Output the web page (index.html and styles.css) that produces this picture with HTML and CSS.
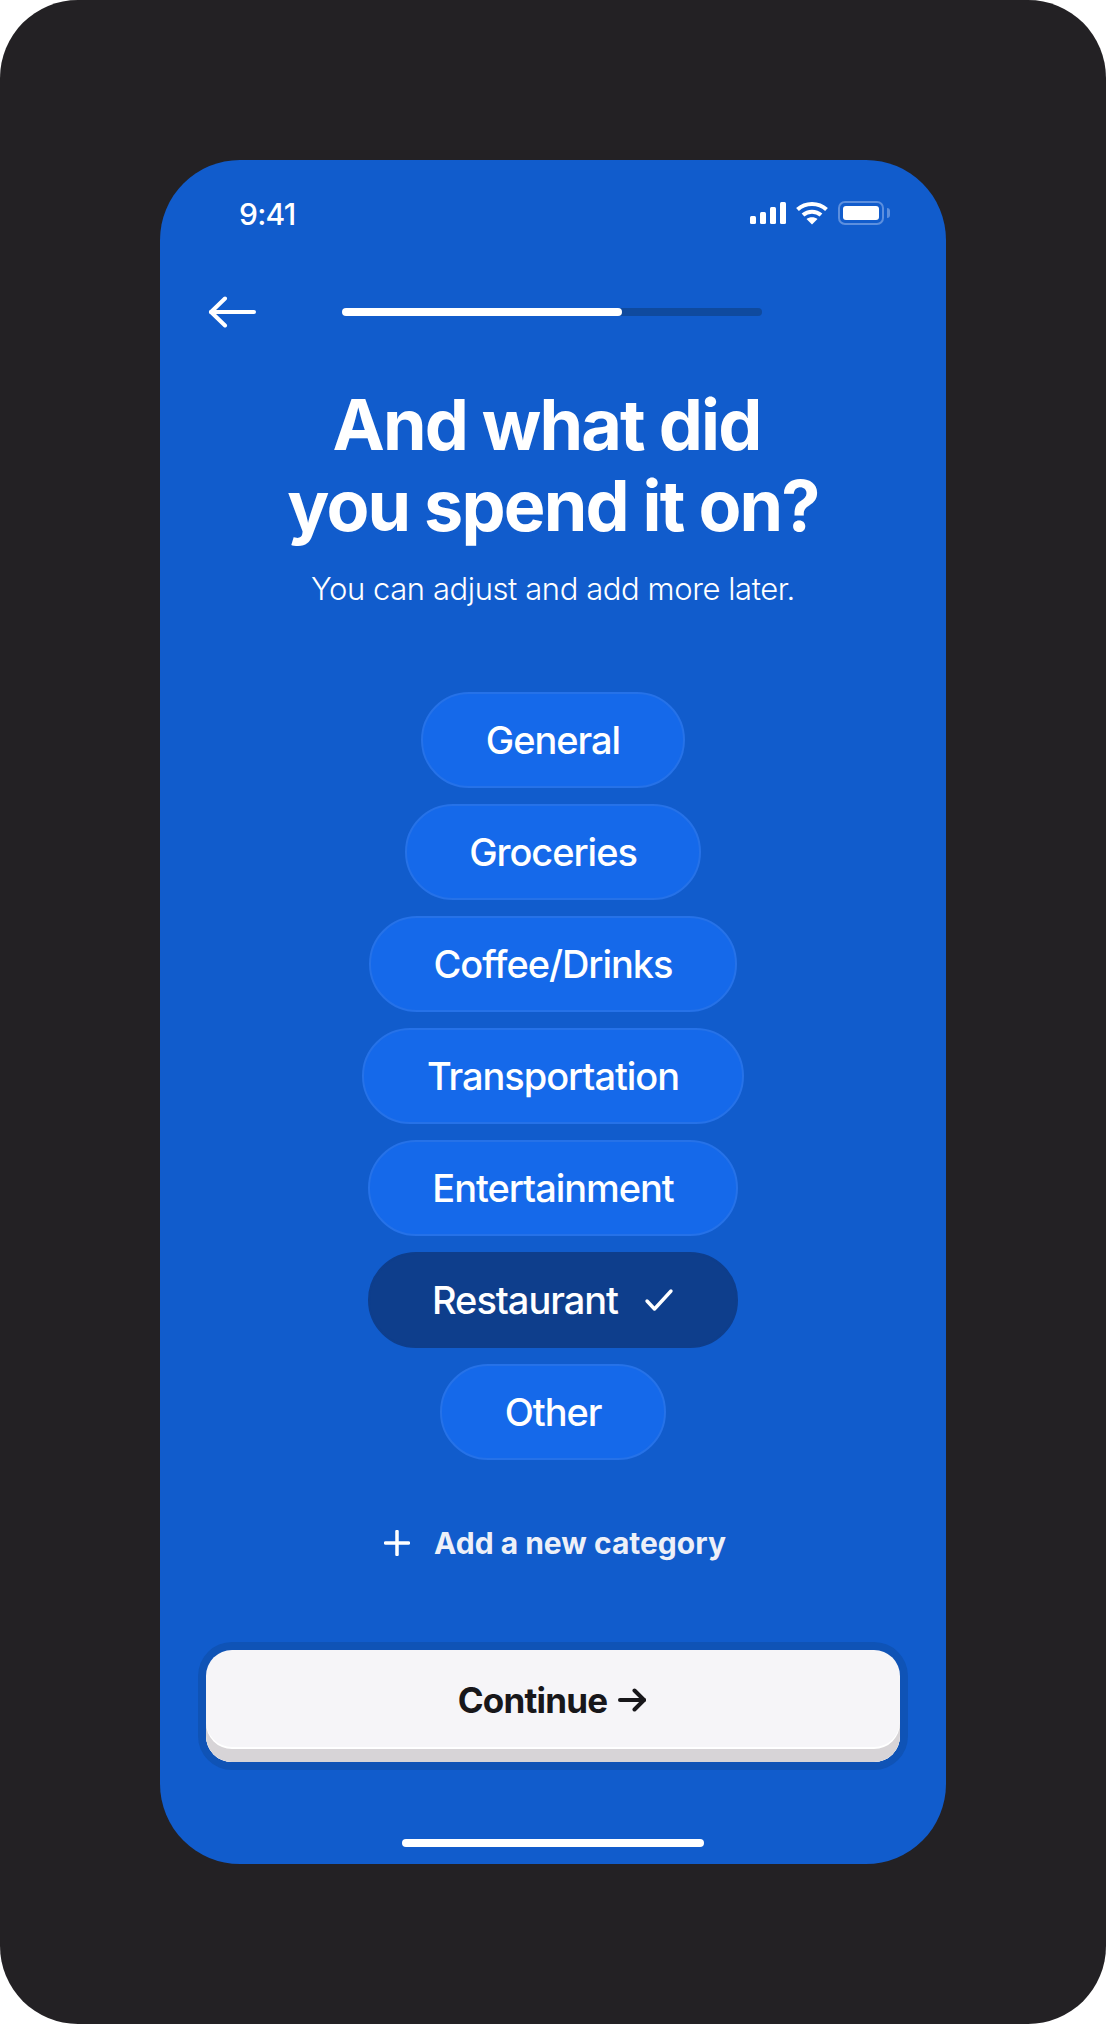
FILE: index.html
```html
<!DOCTYPE html>
<html>
<head>
  <meta charset="utf-8">
  <title>Spending categories</title>
  <link rel="stylesheet" href="styles.css">
</head>
<body>
<div class="frame">
  <div class="phone">

    <div class="status">
      <span class="time">9:41</span>
      <div class="status-icons">
        <svg class="signal" width="36" height="22" viewBox="0 0 36 22" fill="#fff">
          <rect x="0" y="14" width="6" height="8" rx="1.5"/>
          <rect x="10" y="10" width="6" height="12" rx="1.5"/>
          <rect x="20" y="5" width="6" height="17" rx="1.5"/>
          <rect x="30" y="0" width="6" height="22" rx="1.5"/>
        </svg>
        <svg class="wifi" width="32" height="24" viewBox="0 0 32 24" fill="none" stroke="#fff" stroke-width="4">
          <path d="M1.500 8.500C9.500 1 22.500 1 30.500 8.500"/>
          <path d="M7 14C12 9.500 20 9.500 25 14"/>
          <path d="M16 23.500L10.500 18C13.500 15.500 18.500 15.500 21.500 18Z" fill="#fff" stroke="none"/>
        </svg>
        <div class="battery"><div class="battery-fill"></div></div>
      </div>
    </div>

    <div class="topbar">
      <svg class="back" width="48" height="32" viewBox="0 0 48 32" fill="none" stroke="#fff" stroke-width="4" stroke-linecap="round" stroke-linejoin="round">
        <path d="M46 16H3"/>
        <path d="M17 2.500L3 16L17 29.500"/>
      </svg>
      <div class="progress"><div class="progress-fill"></div></div>
    </div>

    <h1 class="title"><span class="title-first">And what did</span><br>you spend it on?</h1>
    <p class="subtitle">You can adjust and add more later.</p>

    <div class="pills">
      <div class="pill">General</div>
      <div class="pill">Groceries</div>
      <div class="pill">Coffee/Drinks</div>
      <div class="pill">Transportation</div>
      <div class="pill">Entertainment</div>
      <div class="pill selected">Restaurant
        <svg width="30" height="24" viewBox="0 0 30 24" fill="none" stroke="#fff" stroke-width="3.400" stroke-linecap="round" stroke-linejoin="round">
          <path d="M3 13L10.500 21L27 3"/>
        </svg>
      </div>
      <div class="pill">Other</div>
    </div>

    <div class="add">
      <svg width="26" height="26" viewBox="0 0 26 26" fill="none" stroke="#fff" stroke-width="3.500" stroke-linecap="round">
        <path d="M13 1.500V24.500"/>
        <path d="M1.500 13H24.500"/>
      </svg>
      <span>Add a new category</span>
    </div>

    <div class="button-ring">
      <div class="button">Continue
        <svg width="28" height="24" viewBox="0 0 28 24" fill="none" stroke="#18171a" stroke-width="4" stroke-linecap="round" stroke-linejoin="round">
          <path d="M2 12H26"/>
          <path d="M16.500 2.500L26 12L16.500 21.500"/>
        </svg>
      </div>
    </div>

    <div class="home"></div>
  </div>
</div>
</body>
</html>
```

FILE: styles.css
```css
* {
  box-sizing: border-box;
}

body {
  margin: 0;
  background: #fff;
  font-family: 'Inter', sans-serif;
  color: #fff;
}

.frame {
  height: 2024px;
  padding: 160px;
  background: #232124;
  border-radius: 78px;
}

.phone {
  height: 1704px;
  display: flex;
  flex-direction: column;
  align-items: center;
  background: #115ccc;
  border-radius: 80px;
}

.status {
  width: 100%;
  height: 54px;
  margin-top: 27px;
  padding: 0 62px 0 79px;
  display: flex;
  justify-content: space-between;
  align-items: center;
}

.time {
  font-size: 30px;
  font-weight: 550;
  letter-spacing: -0.7px;
}

.status-icons {
  display: flex;
  align-items: center;
  gap: 10px;
  margin-top: -3px;
}

.battery {
  position: relative;
  width: 46px;
  height: 24px;
  padding: 3px;
  border: 2px solid #5c8fde;
  border-radius: 7px;
}

.battery::after {
  content: "";
  position: absolute;
  right: -8px;
  top: 5px;
  width: 3px;
  height: 10px;
  background: #5c8fde;
  border-radius: 0 3px 3px 0;
}

.battery-fill {
  height: 100%;
  background: #fff;
  border-radius: 3px;
}

.topbar {
  width: 100%;
  height: 32px;
  margin-top: 55px;
  padding-left: 48px;
  display: flex;
  align-items: center;
}

.progress {
  width: 420px;
  height: 8px;
  margin-left: 86px;
  background: #0f4a9e;
  border-radius: 4px;
}

.progress-fill {
  width: 280px;
  height: 100%;
  background: #fff;
  border-radius: 4px;
}

.title {
  margin: 56px 0 0;
  font-size: 70px;
  line-height: 81px;
  font-weight: 700;
  letter-spacing: -1.8px;
  text-align: center;
}

.title-first {
  margin-right: 13px;
}

.subtitle {
  margin: 23px 0 0;
  font-size: 31px;
  line-height: 40px;
  font-weight: 350;
  letter-spacing: -0.42px;
}

.pills {
  margin-top: 83px;
  display: flex;
  flex-direction: column;
  align-items: center;
  gap: 16px;
}

.pill {
  height: 96px;
  padding: 0 62.5px;
  display: flex;
  align-items: center;
  gap: 26px;
  font-size: 38px;
  font-weight: 450;
  letter-spacing: -1.05px;
  background: #1569ea;
  border: 2px solid #2672e8;
  border-radius: 48px;
}

.pill.selected {
  background: #0e3e8c;
  border-color: #0e3e8c;
}

.add {
  margin-top: 65px;
  margin-left: 4px;
  display: flex;
  align-items: center;
  gap: 24px;
  font-size: 30px;
  font-weight: 700;
  color: #edf0f8;
}

.button-ring {
  width: 710px;
  height: 128px;
  margin-top: 81px;
  padding: 8px;
  background: #0f53b6;
  border-radius: 34px;
}

.button {
  height: 112px;
  padding: 0 2px 13px 0;
  display: flex;
  justify-content: center;
  align-items: center;
  gap: 11px;
  font-size: 35px;
  font-weight: 700;
  letter-spacing: -0.8px;
  color: #18171a;
  background: #f6f5f8;
  border-radius: 26px;
  box-shadow: inset 0 -13px 0 #d7d4d7, inset 0 -15px 0 #fff;
}

.home {
  width: 302px;
  height: 8px;
  margin-top: 69px;
  background: #fff;
  border-radius: 4px;
}
```
